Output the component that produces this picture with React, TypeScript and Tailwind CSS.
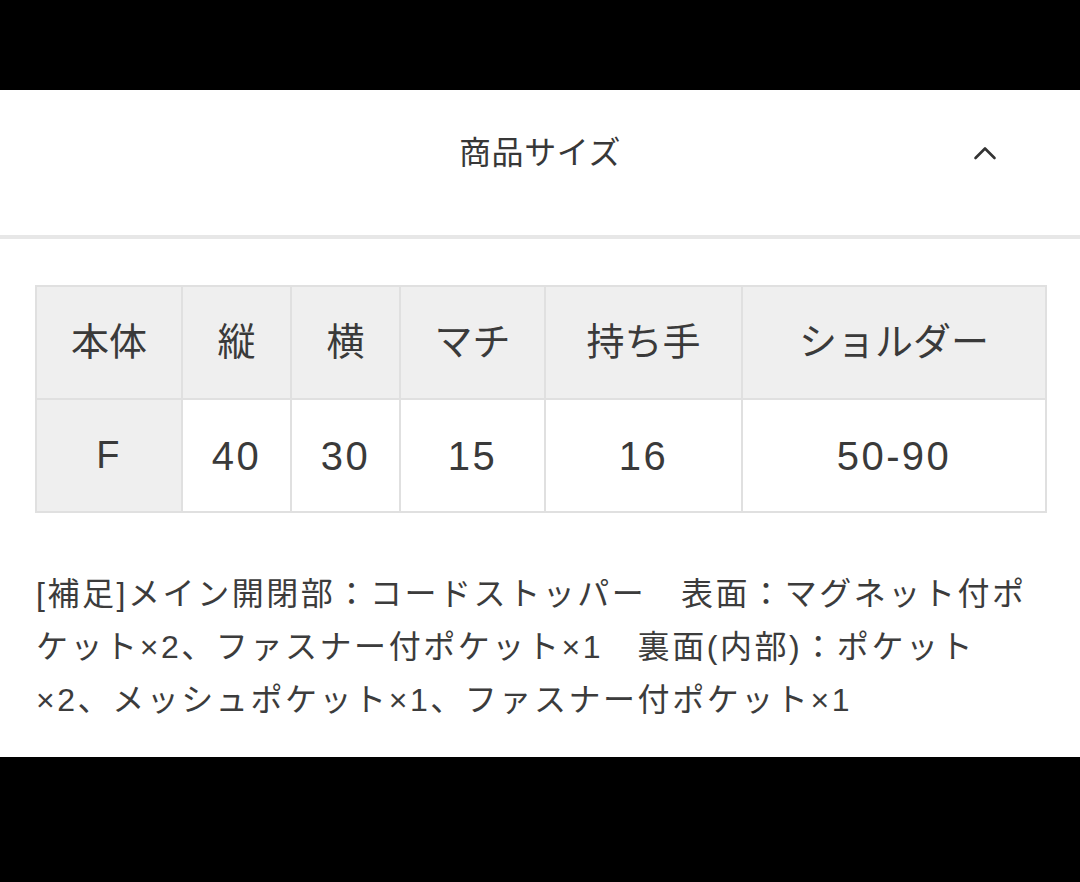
import React from 'react';

const headers = ['本体', '縦', '横', 'マチ', '持ち手', 'ショルダー'];
const values = ['40', '30', '15', '16', '50-90'];
const widths = ['w-[146px]', 'w-[109px]', 'w-[109px]', 'w-[145px]', 'w-[197px]', 'w-[304px]'];

function ChevronUp() {
  return (
    <svg width="24" height="16" viewBox="0 0 24 16" fill="none" className="text-[#333]">
      <path d="M2.5 13 L12 3.5 L21.5 13" stroke="currentColor" strokeWidth="2.6" strokeLinecap="round" strokeLinejoin="round" />
    </svg>
  );
}

export default function App() {
  return (
    <div
      className="min-h-[882px] w-[1080px] bg-black flex flex-col"
      style={{ fontFamily: '"Liberation Sans", "Noto Sans CJK JP", sans-serif' }}
    >
      <div className="h-[90px]" />

      <div className="bg-white text-[#3a3a3a]">
        {/* Header */}
        <div className="relative h-[149px] pt-[43px] border-b-[4px] border-[#e7e7e7]">
          <h2 className="text-center text-[32px] leading-[40px] tracking-[0.02em] text-[#383838]">商品サイズ</h2>
          <div className="absolute right-[83px] top-[55px]">
            <ChevronUp />
          </div>
        </div>

        {/* Size table */}
        <div className="px-[35px] pt-[46px]">
          <table className="border-collapse w-[1010px] table-fixed">
            <thead>
              <tr className="h-[113px] bg-[#efefef]">
                {headers.map((h, i) => (
                  <th key={h} className={`${widths[i]} border-2 border-[#e0e0e0] font-normal text-[38px] text-[#3a3a3a]`}>
                    {h}
                  </th>
                ))}
              </tr>
            </thead>
            <tbody>
              <tr className="h-[113px]">
                <td className="border-2 border-[#e0e0e0] bg-[#efefef] text-center text-[38px] tracking-[0.06em]">F</td>
                {values.map((v) => (
                  <td key={v} className="border-2 border-[#e0e0e0] text-center text-[40px] tracking-[0.06em]">
                    {v}
                  </td>
                ))}
              </tr>
            </tbody>
          </table>
        </div>

        {/* Notes */}
        <p className="px-[36px] pt-[55px] pb-[30px] text-[32px] leading-[53px] tracking-[0.08em] text-[#3c3c3c] whitespace-nowrap">
          [補足]メイン開閉部：コードストッパー　表面：マグネット付ポ
          <br />
          ケット×2、ファスナー付ポケット×1　裏面(内部)：ポケット
          <br />
          ×2、メッシュポケット×1、ファスナー付ポケット×1
        </p>
      </div>

      <div className="flex-1" />
    </div>
  );
}
